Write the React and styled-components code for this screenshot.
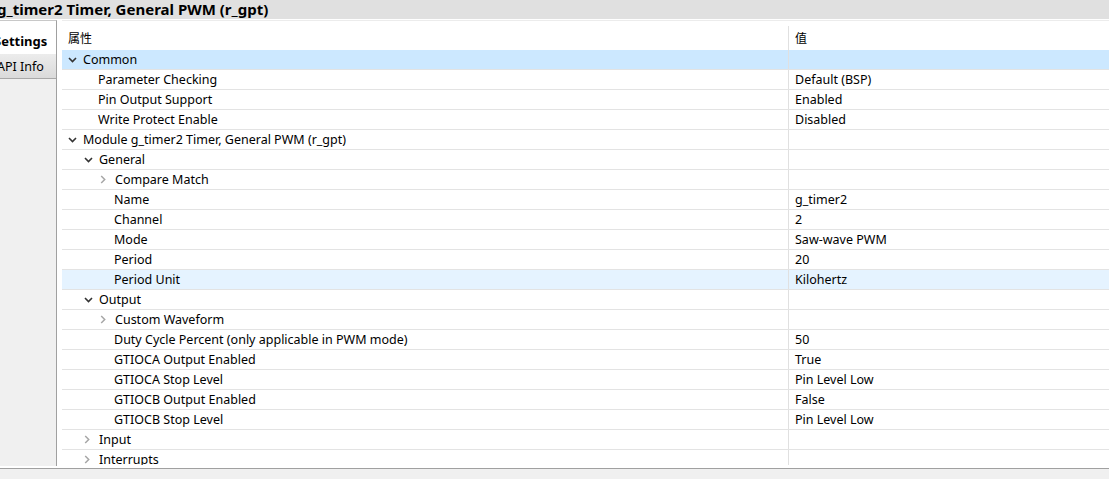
import React from "react";
import styled, { createGlobalStyle } from "styled-components";

const GlobalStyle = createGlobalStyle`
  html, body {
    margin: 0;
    padding: 0;
    background: #ffffff;
    overflow: hidden;
  }
  body {
    font-family: "Noto Sans", "Noto Sans CJK SC", sans-serif;
    font-size: 12.5px;
    color: #000;
  }
`;

const Page = styled.div`
  width: 1109px;
  height: 479px;
  display: flex;
  flex-direction: column;
  overflow: hidden;
`;

const TitleBar = styled.div`
  height: 19px;
  flex-shrink: 0;
  background: #e0e0e0;
  border-bottom: 1px solid #ffffff;
  display: flex;
  align-items: center;
  font-size: 15px;
  font-weight: 700;
  white-space: nowrap;
  overflow: hidden;
`;

const TitleText = styled.span`
  margin-left: -3px;
  line-height: 19px;
`;

const Body = styled.div`
  height: 448px;
  flex-shrink: 0;
  display: flex;
  background: #ffffff;
`;

const Sidebar = styled.div`
  width: 56px;
  height: 445px;
  background: #f0f0f0;
  border-top: 1px solid #c8c8c8;
  border-right: 1px solid #a0a0a0;
  display: flex;
  flex-direction: column;
  overflow: hidden;
`;

const Tab = styled.div`
  height: ${p => (p.$active ? "33px" : "25px")};
  flex-shrink: 0;
  background: ${p => (p.$active ? "#ffffff" : "linear-gradient(#ececec, #dadada)")};
  border-bottom: ${p => (p.$active ? "none" : "1px solid #a8a8a8")};
  display: flex;
  align-items: center;
  padding-top: ${p => (p.$active ? "6px" : "0")};
  box-sizing: border-box;
  font-size: ${p => (p.$active ? "13px" : "12.5px")};
  font-weight: ${p => (p.$active ? 700 : 400)};
  white-space: nowrap;
  overflow: hidden;
`;

const TabLabel = styled.span`
  margin-left: ${p => p.$shift}px;
`;

const TableArea = styled.div`
  flex: 1;
  height: 445px;
  padding-left: 5px;
  overflow: hidden;
  display: flex;
  flex-direction: column;
`;

const HeaderRow = styled.div`
  height: 29px;
  flex-shrink: 0;
  display: grid;
  grid-template-columns: 726px 1fr;
  border-top: 1px solid #ececec;
`;

const HeaderCell = styled.div`
  padding-left: 6px;
  border-left: ${p => (p.$value ? "1px solid #e0e0e0" : "none")};
  margin-top: ${p => (p.$value ? "5px" : "0")};
  padding-top: ${p => (p.$value ? "3px" : "8px")};
  font-size: 12px;
`;

const Row = styled.div`
  height: 19px;
  flex-shrink: 0;
  display: grid;
  grid-template-columns: 726px 1fr;
  border-bottom: 1px solid #e3e3e3;
  background: ${p => (p.$state === "selected" ? "#cce8ff" : p.$state === "hover" ? "#e5f3ff" : "transparent")};
`;

const NameCell = styled.div`
  display: flex;
  align-items: center;
  padding-left: ${p => 6 + p.$level * 16}px;
  white-space: nowrap;
  overflow: hidden;
`;

const Toggle = styled.span`
  width: 15px;
  height: 19px;
  display: inline-flex;
  align-items: center;
  justify-content: flex-start;
  flex-shrink: 0;
`;

const Label = styled.span`
  line-height: 19px;
`;

const ValueCell = styled.div`
  border-left: 1px solid #e0e0e0;
  padding-left: 6px;
  line-height: 19px;
  white-space: nowrap;
`;

const Footer = styled.div`
  flex: 1;
  background: #f0f0f0;
  border-top: 1px solid #a0a0a0;
`;

const Chevron = ({ open }) =>
  open ? (
    <svg width="9" height="6" viewBox="0 0 9 6">
      <path d="M1 1 L4.5 4.5 L8 1" fill="none" stroke="#333333" strokeWidth="1.6" />
    </svg>
  ) : (
    <svg width="6" height="9" viewBox="0 0 6 9">
      <path d="M1.2 1 L4.7 4.5 L1.2 8" fill="none" stroke="#a6a6a6" strokeWidth="1.5" />
    </svg>
  );

const rows = [
  { level: 0, name: "Common", toggle: "open", state: "selected" },
  { level: 1, name: "Parameter Checking", value: "Default (BSP)" },
  { level: 1, name: "Pin Output Support", value: "Enabled" },
  { level: 1, name: "Write Protect Enable", value: "Disabled" },
  { level: 0, name: "Module g_timer2 Timer, General PWM (r_gpt)", toggle: "open" },
  { level: 1, name: "General", toggle: "open" },
  { level: 2, name: "Compare Match", toggle: "closed" },
  { level: 2, name: "Name", value: "g_timer2" },
  { level: 2, name: "Channel", value: "2" },
  { level: 2, name: "Mode", value: "Saw-wave PWM" },
  { level: 2, name: "Period", value: "20" },
  { level: 2, name: "Period Unit", value: "Kilohertz", state: "hover" },
  { level: 1, name: "Output", toggle: "open" },
  { level: 2, name: "Custom Waveform", toggle: "closed" },
  { level: 2, name: "Duty Cycle Percent (only applicable in PWM mode)", value: "50" },
  { level: 2, name: "GTIOCA Output Enabled", value: "True" },
  { level: 2, name: "GTIOCA Stop Level", value: "Pin Level Low" },
  { level: 2, name: "GTIOCB Output Enabled", value: "False" },
  { level: 2, name: "GTIOCB Stop Level", value: "Pin Level Low" },
  { level: 1, name: "Input", toggle: "closed" },
  { level: 1, name: "Interrupts", toggle: "closed" },
];

export default function App() {
  return (
    <Page>
      <GlobalStyle />
      <TitleBar>
        <TitleText>g_timer2 Timer, General PWM (r_gpt)</TitleText>
      </TitleBar>
      <Body>
        <Sidebar>
          <Tab $active>
            <TabLabel $shift={-6}>Settings</TabLabel>
          </Tab>
          <Tab>
            <TabLabel $shift={-3}>API Info</TabLabel>
          </Tab>
        </Sidebar>
        <TableArea>
          <HeaderRow>
            <HeaderCell>属性</HeaderCell>
            <HeaderCell $value>值</HeaderCell>
          </HeaderRow>
          {rows.map((r, i) => (
            <Row key={i} $state={r.state}>
              <NameCell $level={r.toggle ? r.level : r.level - 1}>
                <Toggle>{r.toggle && <Chevron open={r.toggle === "open"} />}</Toggle>
                {!r.toggle && <Toggle />}
                <Label>{r.name}</Label>
              </NameCell>
              <ValueCell>{r.value || ""}</ValueCell>
            </Row>
          ))}
        </TableArea>
      </Body>
      <Footer />
    </Page>
  );
}
